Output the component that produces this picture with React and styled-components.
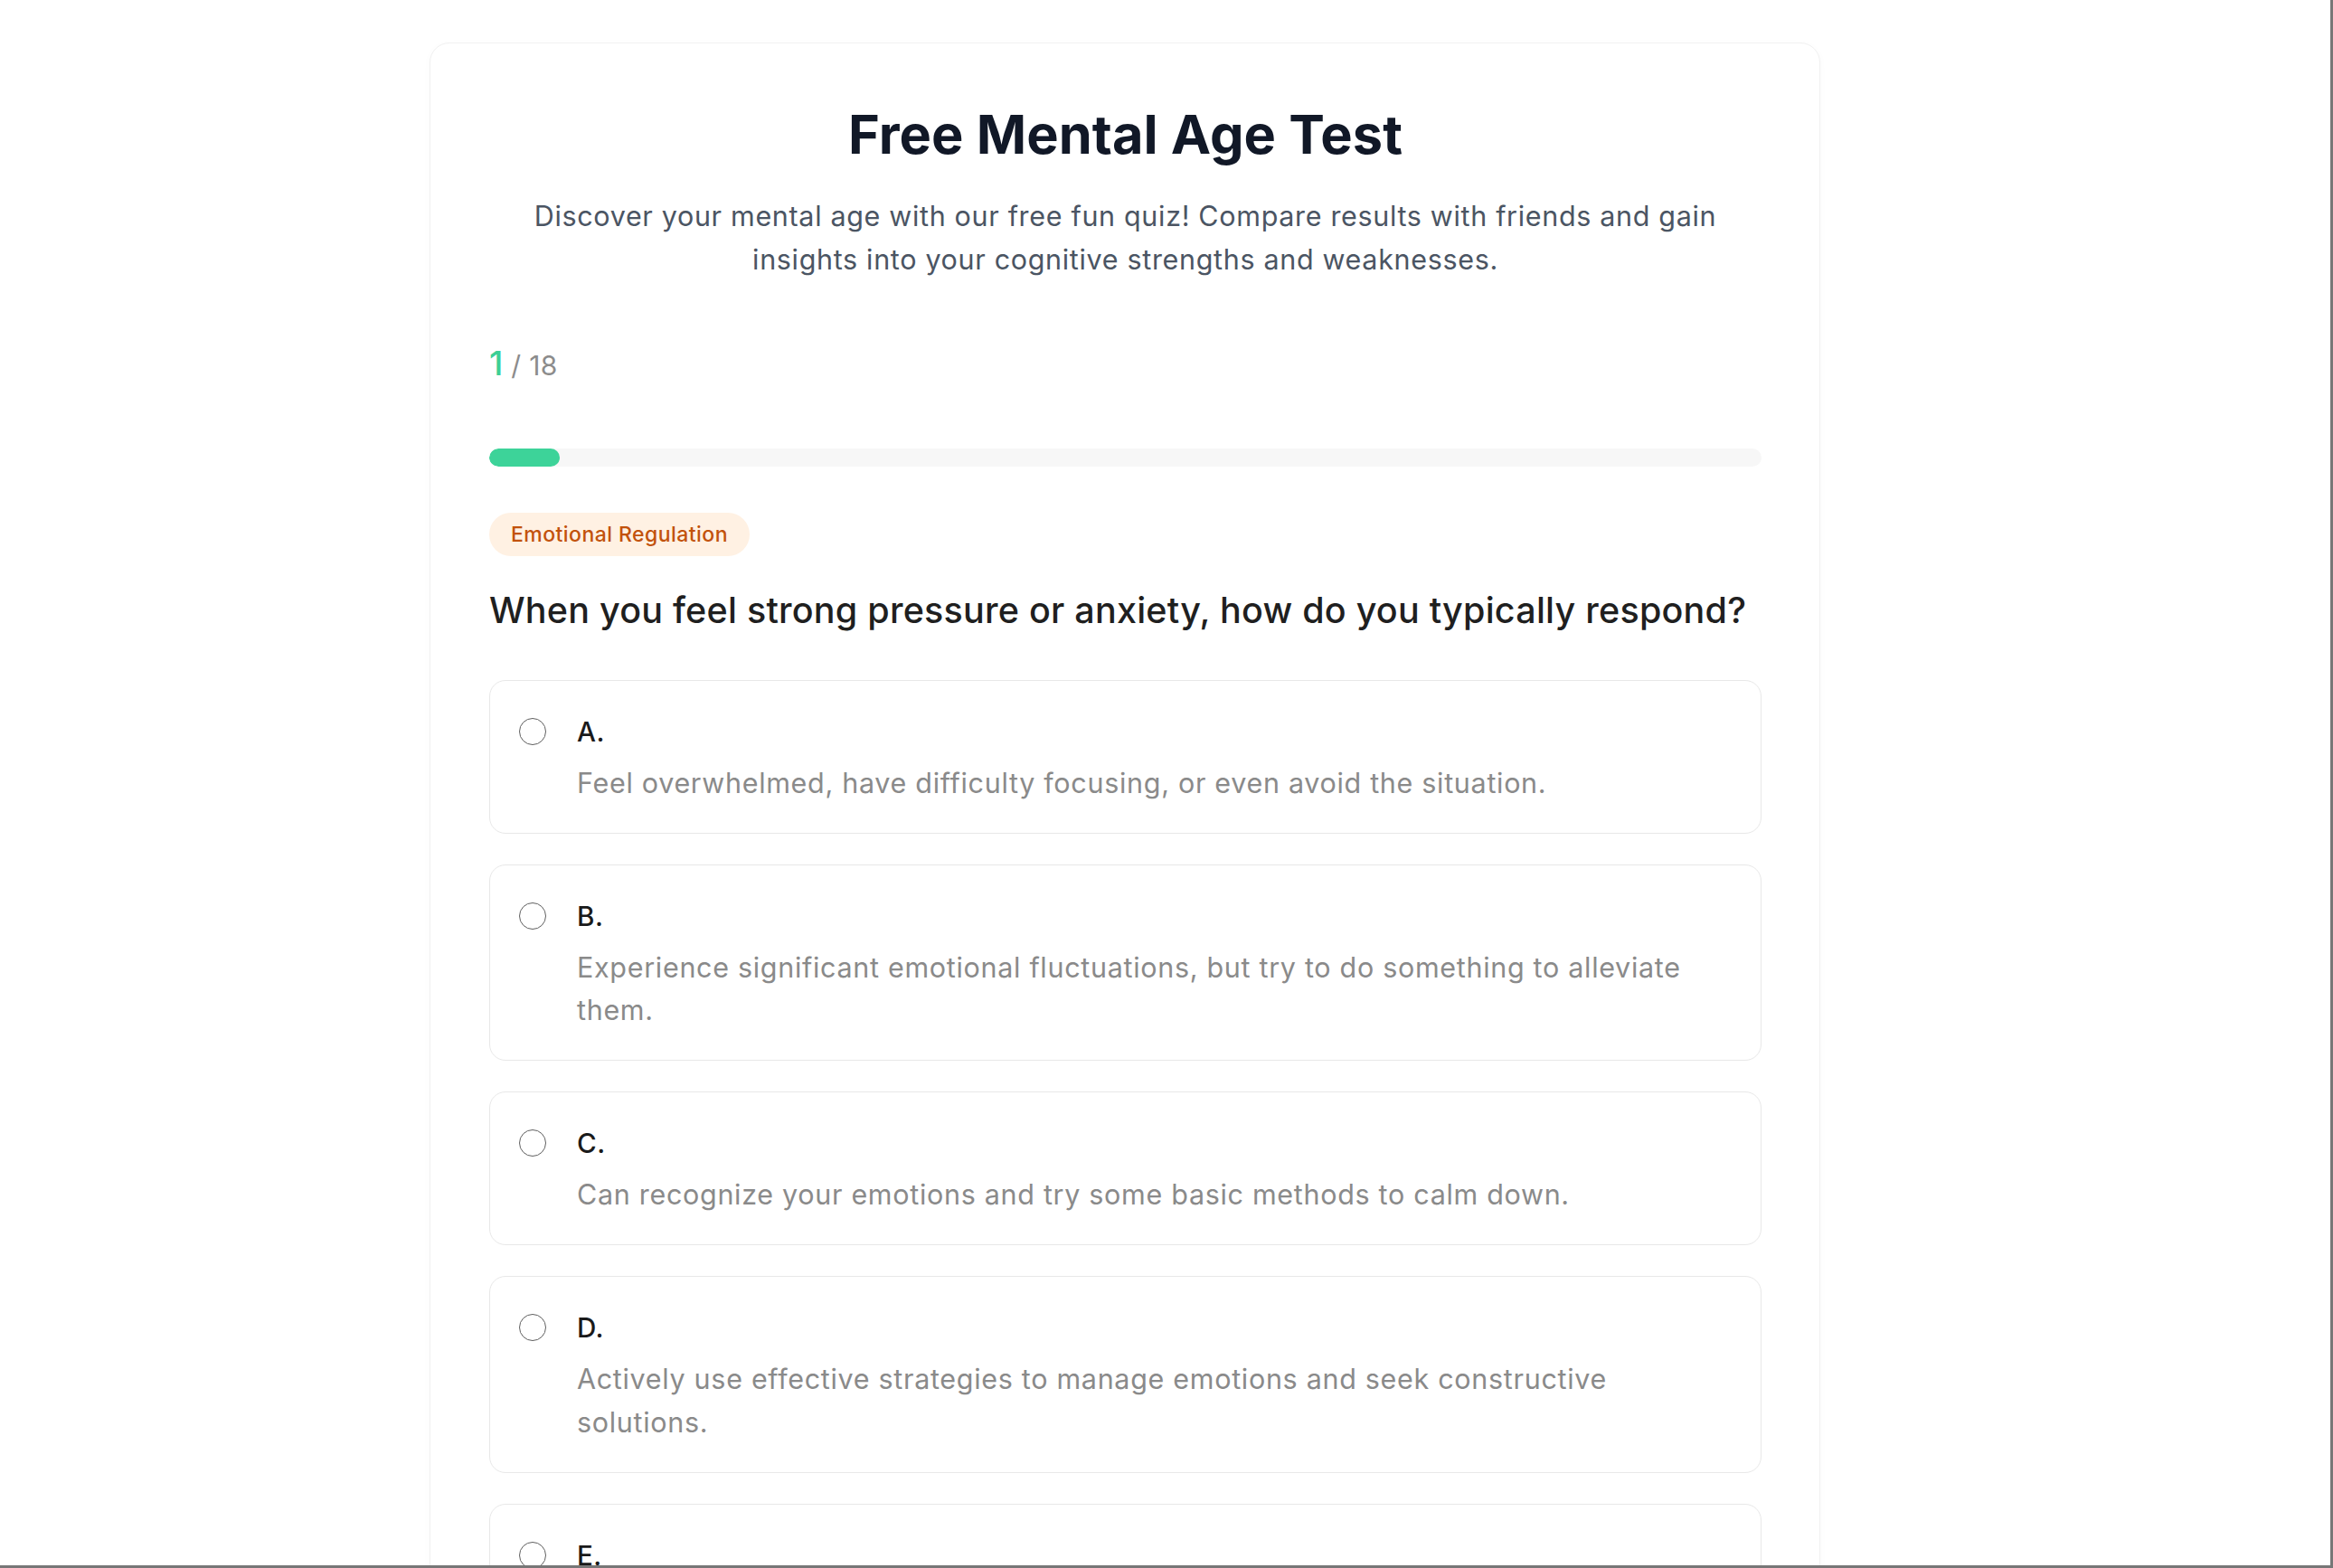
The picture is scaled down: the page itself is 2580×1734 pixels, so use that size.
import React from "react";
import styled, { createGlobalStyle } from "styled-components";

const GlobalStyle = createGlobalStyle`
    * {
        box-sizing: border-box;
    }
    html, body {
        margin: 0;
        padding: 0;
        background: #ffffff;
        font-family: 'Inter', 'Noto Sans', sans-serif;
    }
`

const Frame = styled.div`
    height: 100vh;
    overflow: hidden;
    border-right: 3px solid #777777;
    border-bottom: 3px solid #777777;
    background: #ffffff;
`

const Card = styled.main`
    width: 1538px;
    margin: 47px 0 0 475px;
    padding: 64px 64px 80px 65px;
    background: #ffffff;
    border: 1px solid #f1f1f1;
    border-radius: 22px;
    box-shadow: 0 2px 10px rgba(0, 0, 0, 0.025);
`

const Header = styled.header`
    display: flex;
    flex-direction: column;
    align-items: center;
    text-align: center;
`

const Title = styled.h1`
    margin: 0;
    font-size: 59.5px;
    line-height: 72px;
    font-weight: 700;
    color: #111827;
    letter-spacing: 0.05px;
`

const Subtitle = styled.p`
    margin: 31px 0 0;
    max-width: 1316px;
    font-size: 30.5px;
    line-height: 47.5px;
    font-weight: 400;
    color: #4b5563;
    letter-spacing: 0.67px;
`

const Counter = styled.div`
    display: flex;
    align-items: baseline;
    margin-top: 65.5px;
    line-height: 52px;
`

const Current = styled.span`
    font-size: 37px;
    font-weight: 500;
    color: #3ccf95;
`

const Total = styled.span`
    font-size: 30px;
    color: #8c8c8c;
    letter-spacing: 0.4px;
    white-space: pre;
`

const Track = styled.div`
    margin-top: 66.5px;
    height: 20px;
    border-radius: 10px;
    background: #f7f7f7;
    overflow: hidden;
`

const Fill = styled.div`
    height: 100%;
    border-radius: 10px;
    background: #3dd399;
`

const Badge = styled.span`
    display: inline-block;
    margin-top: 51px;
    padding: 6px 24px;
    border-radius: 999px;
    background: #fff1e3;
    color: #c2520c;
    font-size: 23px;
    line-height: 36px;
    font-weight: 500;
    letter-spacing: 0.45px;
`

const Question = styled.h2`
    margin: 33.5px 0 0;
    font-size: 39.5px;
    line-height: 53px;
    font-weight: 500;
    color: #1f1f1f;
    letter-spacing: 0.22px;
`

const Options = styled.div`
    display: flex;
    flex-direction: column;
    gap: 34px;
    margin-top: 50px;
`

const Option = styled.label`
    display: flex;
    align-items: flex-start;
    gap: 34px;
    padding: 33px 32px 31.5px;
    border: 1.5px solid #e8e8e8;
    border-radius: 18px;
    background: #ffffff;
    cursor: pointer;
`

const Radio = styled.span`
    flex: none;
    width: 30px;
    height: 30px;
    margin-top: 8px;
    border-radius: 50%;
    border: 1.5px solid #5f5f5f;
    background: #ffffff;
`

const OptionText = styled.div`
    display: flex;
    flex-direction: column;
    gap: 10px;
`

const Letter = styled.span`
    font-size: 29.6px;
    line-height: 46px;
    font-weight: 500;
    color: #1a1a1a;
    letter-spacing: 0.5px;
`

const Description = styled.span`
    font-size: 30.5px;
    line-height: 47.5px;
    color: #8a8a8a;
    letter-spacing: 0.69px;
`

const answers = [
    { key: "A", text: "Feel overwhelmed, have difficulty focusing, or even avoid the situation." },
    { key: "B", text: "Experience significant emotional fluctuations, but try to do something to alleviate them." },
    { key: "C", text: "Can recognize your emotions and try some basic methods to calm down." },
    { key: "D", text: "Actively use effective strategies to manage emotions and seek constructive solutions." },
    { key: "E", text: "Remain calm and composed, and turn pressure into motivation for growth." },
]

export default function App() {
    const current = 1
    const total = 18

    return (
        <Frame>
            <GlobalStyle />
            <Card>
                <Header>
                    <Title>Free Mental Age Test</Title>
                    <Subtitle>
                        Discover your mental age with our free fun quiz! Compare results with friends and gain insights into your cognitive strengths and weaknesses.
                    </Subtitle>
                </Header>
                <Counter>
                    <Current>{current}</Current>
                    <Total> / {total}</Total>
                </Counter>
                <Track>
                    <Fill style={{ width: `${(current / total) * 100}%` }} />
                </Track>
                <Badge>Emotional Regulation</Badge>
                <Question>When you feel strong pressure or anxiety, how do you typically respond?</Question>
                <Options>
                    {answers.map((a) => (
                        <Option key={a.key}>
                            <Radio />
                            <OptionText>
                                <Letter>{a.key}.</Letter>
                                <Description>{a.text}</Description>
                            </OptionText>
                        </Option>
                    ))}
                </Options>
            </Card>
        </Frame>
    )
}
